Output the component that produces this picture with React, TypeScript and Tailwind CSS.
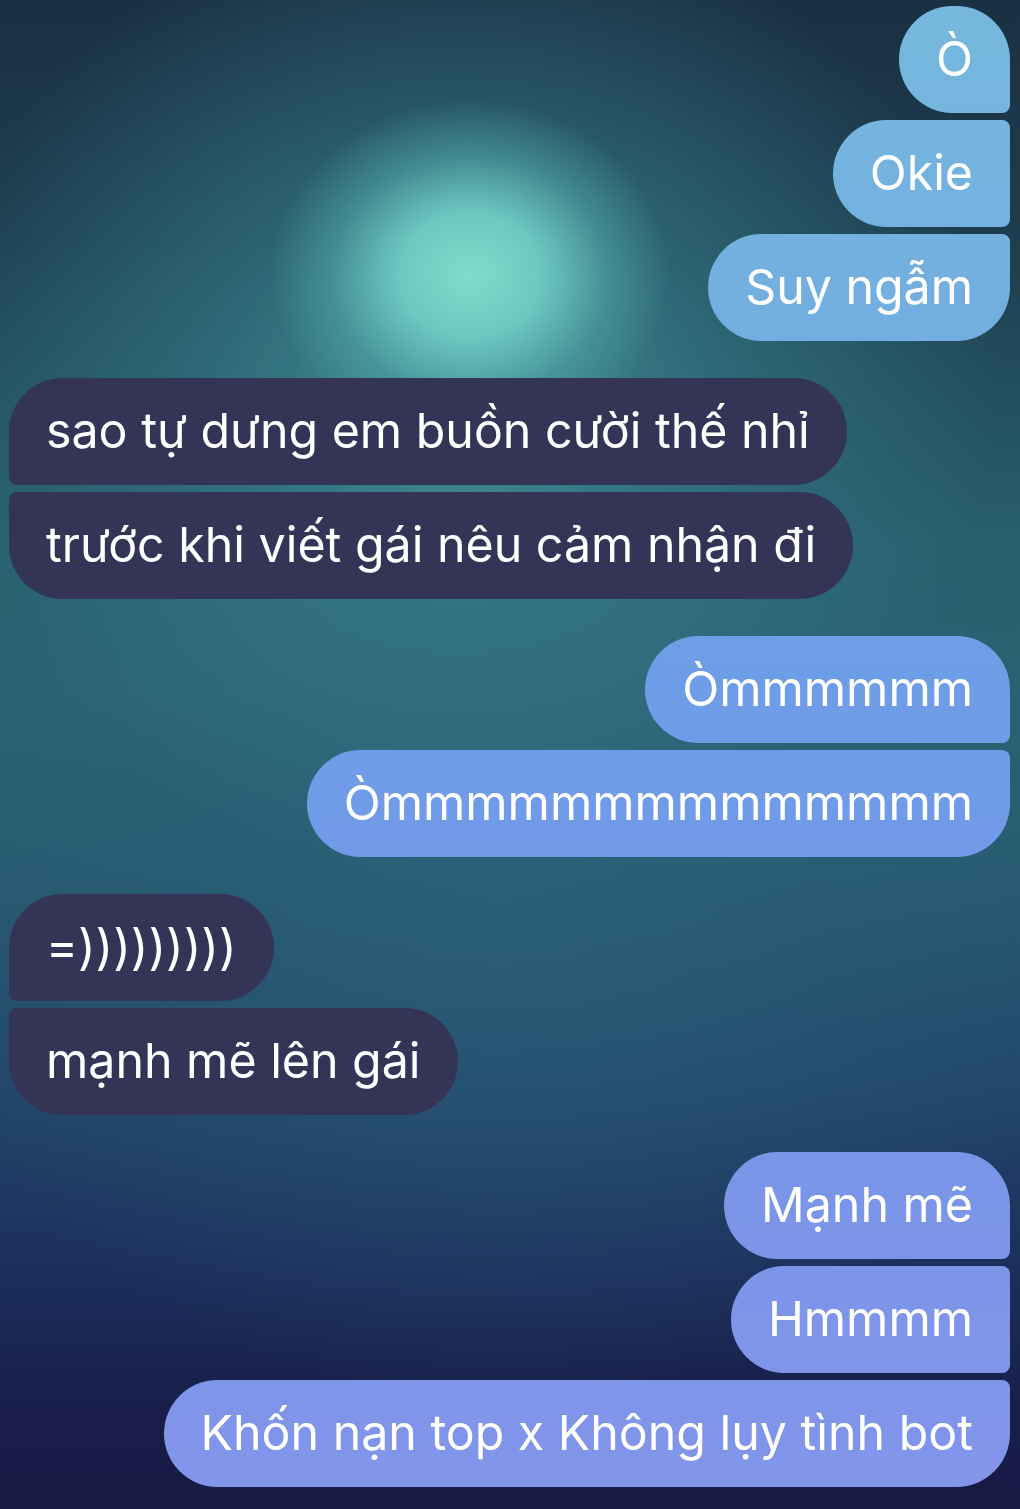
type Group = { mine: boolean; lines: string[] };

const groups: Group[] = [
  { mine: true, lines: ['Ò', 'Okie', 'Suy ngẫm'] },
  { mine: false, lines: ['sao tự dưng em buồn cười thế nhỉ', 'trước khi viết gái nêu cảm nhận đi'] },
  { mine: true, lines: ['Òmmmmmm', 'Òmmmmmmmmmmmmmm'] },
  { mine: false, lines: ['=)))))))))', 'mạnh mẽ lên gái'] },
  { mine: true, lines: ['Mạnh mẽ', 'Hmmmm', 'Khốn nạn top x Không lụy tình bot'] },
];

function corners(mine: boolean, i: number, n: number) {
  const first = i === 0;
  const last = i === n - 1;
  if (mine) {
    if (first) return 'rounded-tl-[54px] rounded-bl-[54px] rounded-tr-[54px] rounded-br-[8px]';
    if (last) return 'rounded-tl-[54px] rounded-bl-[54px] rounded-tr-[8px] rounded-br-[54px]';
    return 'rounded-tl-[54px] rounded-bl-[54px] rounded-tr-[8px] rounded-br-[8px]';
  }
  if (first) return 'rounded-tr-[54px] rounded-br-[54px] rounded-tl-[54px] rounded-bl-[8px]';
  if (last) return 'rounded-tr-[54px] rounded-br-[54px] rounded-tl-[8px] rounded-bl-[54px]';
  return 'rounded-tr-[54px] rounded-br-[54px] rounded-tl-[8px] rounded-bl-[8px]';
}

function Bubble({ text, mine, cls }: { text: string; mine: boolean; cls: string }) {
  return (
    <div
      className={
        mine
          ? `flex h-[107px] items-center px-[37px] whitespace-nowrap bg-fixed bg-[linear-gradient(180deg,#76b8dd_0%,#72aee0_22%,#6e9de7_45%,#7398e8_65%,#7c95e8_82%,#8295ea_100%)] ${cls}`
          : `flex h-[107px] items-center px-[37px] whitespace-nowrap bg-[#343556] ${cls}`
      }
    >
      {text}
    </div>
  );
}

export default function App() {
  return (
    <div className="relative h-[1509px] w-full overflow-hidden bg-[radial-gradient(ellipse_200px_175px_at_470px_275px,#80dccb_0%,#6ec8c0_35%,rgba(80,165,165,0.55)_70%,transparent_100%),radial-gradient(ellipse_540px_480px_at_460px_390px,rgba(70,150,155,0.9)_0%,rgba(55,125,140,0.6)_45%,transparent_100%),radial-gradient(ellipse_600px_500px_at_500px_900px,rgba(45,100,125,0.6)_0%,transparent_100%),linear-gradient(180deg,#1a3043_0%,#1d3e4f_16%,#285f6e_36%,#2a6272_46%,#275a70_58%,#22466a_72%,#1c2f5c_84%,#181d49_94%,#171a45_100%)] font-['Inter',sans-serif] text-[48.3px] text-white">
      <div className="flex flex-col gap-[37px] pl-[9px] pr-[10px] pt-[6px]">
        {groups.map((g, gi) => (
          <div key={gi} className={g.mine ? 'flex flex-col items-end gap-[7px]' : 'flex flex-col items-start gap-[7px]'}>
            {g.lines.map((t, i) => (
              <Bubble key={i} text={t} mine={g.mine} cls={corners(g.mine, i, g.lines.length)} />
            ))}
          </div>
        ))}
      </div>
    </div>
  );
}
